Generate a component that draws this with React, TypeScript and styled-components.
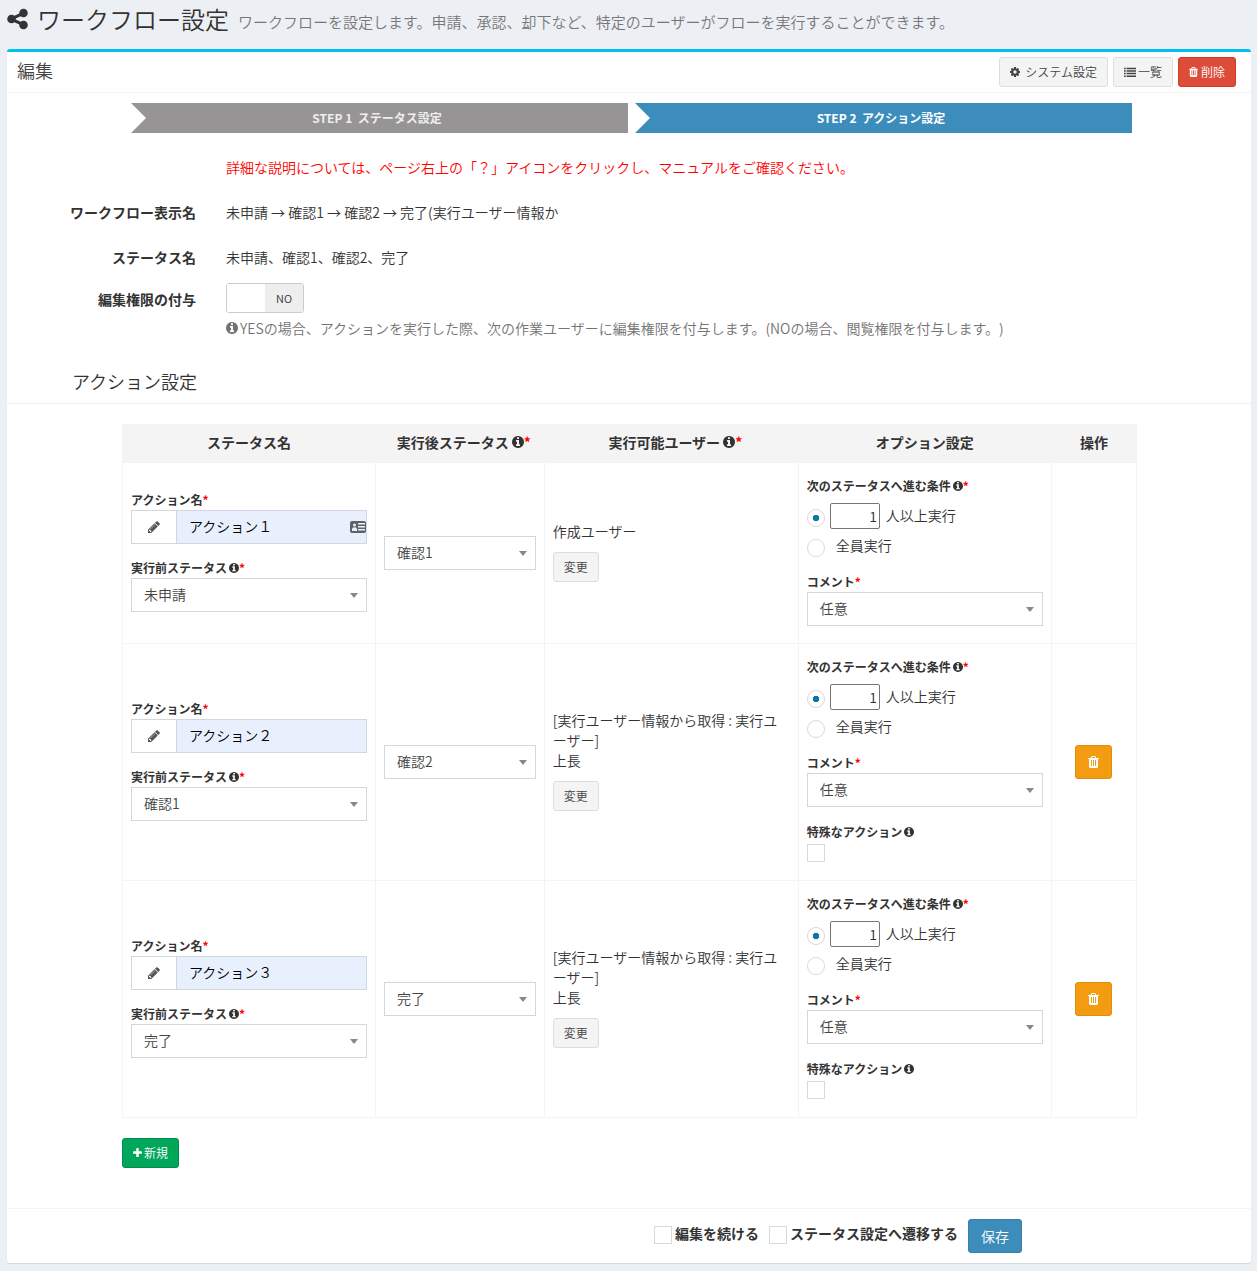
import React, { useId, useState } from "react";
import styled, { createGlobalStyle, css } from "styled-components";

const GlobalStyle = createGlobalStyle`
  *, *::before, *::after { box-sizing: border-box; }
  body {
    margin: 0;
    background: #ecf0f5;
    color: #333;
    font-family: "Noto Sans CJK JP", "Noto Sans", sans-serif;
    font-size: 14px;
    font-weight: 350;
    line-height: 20px;
    text-spacing-trim: space-all;
  }
  button, input, select { font: inherit; color: inherit; margin: 0; }
  h1, h2, h3 { margin: 0; font-weight: 350; }
  p { margin: 0; }
`;

/* ---------- icons ---------- */

const glyphs = {
  share: {
    x: 128,
    w: 1536,
    d: "M1344 1024q133 0 226.5 93.5t93.5 226.5-93.5 226.5-226.5 93.5-226.5-93.5-93.5-226.5q0-12 2-34l-360-180q-92 86-218 86-133 0-226.5-93.5t-93.5-226.5 93.5-226.5 226.5-93.5q126 0 218 86l360-180q-2-22-2-34 0-133 93.5-226.5t226.5-93.5 226.5 93.5 93.5 226.5-93.5 226.5-226.5 93.5q-126 0-218-86l-360 180q2 22 2 34t-2 34l360 180q92-86 218-86z",
  },
  cog: {
    x: 128,
    w: 1536,
    d: "M1152 896q0-106-75-181t-181-75-181 75-75 181 75 181 181 75 181-75 75-181zm512-109v222q0 12-8 23t-20 13l-185 28q-19 54-39 91 35 50 107 138 10 12 10 25t-9 23q-27 37-99 108t-94 71q-12 0-26-9l-138-108q-44 23-91 38-16 136-29 186-7 28-36 28h-222q-14 0-24.5-8.5t-11.5-21.5l-28-184q-49-16-90-37l-141 107q-10 9-25 9-14 0-25-11-126-114-165-168-7-10-7-23 0-12 8-23 15-21 51-66.5t54-70.5q-27-50-41-99l-183-27q-13-2-21-12.5t-8-23.5v-222q0-12 8-23t19-13l186-28q14-46 39-92-40-57-107-138-10-12-10-24 0-10 9-23 26-36 98.5-107.5t94.5-71.5q13 0 26 10l138 107q44-23 91-38 16-136 29-186 7-28 36-28h222q14 0 24.5 8.5t11.5 21.5l28 184q49 16 90 37l142-107q9-9 24-9 13 0 25 10 129 119 165 170 7 8 7 22 0 12-8 23-15 21-51 66.5t-54 70.5q26 50 41 98l183 28q13 2 21 12.5t8 23.5z",
  },
  list: {
    x: 0,
    w: 1792,
    d: "M0 256h256v224h-256zM384 256h1408v224h-1408zM0 640h256v224h-256zM384 640h1408v224h-1408zM0 1024h256v224h-256zM384 1024h1408v224h-1408zM0 1408h256v224h-256zM384 1408h1408v224h-1408z",
  },
  trash: {
    x: 192,
    w: 1408,
    d: "M704 1376v-704q0-14-9-23t-23-9h-64q-14 0-23 9t-9 23v704q0 14 9 23t23 9h64q14 0 23-9t9-23zm256 0v-704q0-14-9-23t-23-9h-64q-14 0-23 9t-9 23v704q0 14 9 23t23 9h64q14 0 23-9t9-23zm256 0v-704q0-14-9-23t-23-9h-64q-14 0-23 9t-9 23v704q0 14 9 23t23 9h64q14 0 23-9t9-23zm-544-992h448l-48-117q-7-9-17-11h-317q-10 2-17 11zm928 32v64q0 14-9 23t-23 9h-96v948q0 83-47 143.5t-113 60.5h-832q-66 0-113-58.5t-47-141.5v-952h-96q-14 0-23-9t-9-23v-64q0-14 9-23t23-9h309l70-167q15-37 54-63t79-26h320q40 0 79 26t54 63l70 167h309q14 0 23 9t9 23z",
  },
  info: {
    x: 128,
    w: 1536,
    d: "M1152 1376v-160q0-14-9-23t-23-9h-96v-512q0-14-9-23t-23-9h-320q-14 0-23 9t-9 23v160q0 14 9 23t23 9h96v320h-96q-14 0-23 9t-9 23v160q0 14 9 23t23 9h448q14 0 23-9t9-23zm-128-896v-160q0-14-9-23t-23-9h-192q-14 0-23 9t-9 23v160q0 14 9 23t23 9h192q14 0 23-9t9-23zm640 416q0 209-103 385.5t-279.5 279.5-385.5 103-385.5-103-279.5-279.5-103-385.5 103-385.5 279.5-279.5 385.5-103 385.5 103 279.5 279.5 103 385.5z",
  },
  plus: {
    x: 192,
    w: 1408,
    d: "M1600 736v192q0 40-28 68t-68 28h-416v416q0 40-28 68t-68 28h-192q-40 0-68-28t-28-68v-416h-416q-40 0-68-28t-28-68v-192q0-40 28-68t68-28h416v-416q0-40 28-68t68-28h192q40 0 68 28t28 68v416h416q40 0 68 28t28 68z",
  },
  pencil: {
    x: 128,
    w: 1536,
    d: "M491 1536l91-91-235-235-91 91v107h128v128h107zm523-928q0-22-22-22-10 0-17 7l-542 542q-7 7-7 17 0 22 22 22 10 0 17-7l542-542q7-7 7-17zm-54-192l416 416-832 832h-416v-416zm683 96q0 53-37 90l-166 166-416-416 166-165q36-38 90-38 53 0 91 38l235 234q37 39 37 91z",
  },
};

const Glyph = styled.svg`
  display: block;
  flex: none;
  fill: currentColor;
`;

function Icon({ name, size = 14 }: { name: keyof typeof glyphs; size?: number }) {
  const g = glyphs[name];
  return (
    <Glyph
      viewBox={`${g.x} 0 ${g.w} 1792`}
      width={Math.round((size * g.w) / 1792)}
      height={size}
      aria-hidden="true"
    >
      <path d={g.d} />
    </Glyph>
  );
}

/* ---------- page frame ---------- */

const PageHeader = styled.header`
  display: flex;
  align-items: flex-end;
  gap: 9px;
  padding: 6px 7px 17px;
`;

const PageTitle = styled.h1`
  display: flex;
  align-items: center;
  gap: 9px;
  font-size: 24px;
  line-height: 26px;
`;

const PageNote = styled.p`
  color: #777;
  font-size: 15px;
`;

const Box = styled.main`
  margin: 0 6px 8px 7px;
  background: #fff;
  border-top: 3px solid #00c0ef;
  border-radius: 3px;
  box-shadow: 0 1px 1px rgba(0, 0, 0, 0.1);
`;

const BoxHeader = styled.div`
  display: flex;
  align-items: center;
  justify-content: space-between;
  padding: 5px 15px 5px 10px;
  border-bottom: 1px solid #f4f4f4;
`;

const BoxTitle = styled.h2`
  color: #444;
  font-size: 18px;
  line-height: 20px;
  padding-bottom: 5px;
`;

const Tools = styled.div`
  display: flex;
  gap: 5px;
`;

const tones = {
  plain: ["#f4f4f4", "#ddd", "#444"],
  danger: ["#dd4b39", "#d73925", "#fff"],
  success: ["#00a65a", "#008d4c", "#fff"],
  warning: ["#f39c12", "#e08e0b", "#fff"],
  primary: ["#3c8dbc", "#367fa9", "#fff"],
};

const buttonLook = css<{ $tone: keyof typeof tones; $large?: boolean; $gap?: number }>`
  display: inline-flex;
  align-items: center;
  justify-content: center;
  gap: ${(p) => p.$gap ?? 2}px;
  height: ${(p) => (p.$large ? 34 : 30)}px;
  padding: 0 ${(p) => (p.$large ? 12 : 10)}px;
  border: 1px solid ${(p) => tones[p.$tone][1]};
  border-radius: 3px;
  background: ${(p) => tones[p.$tone][0]};
  color: ${(p) => tones[p.$tone][2]};
  font-size: ${(p) => (p.$large ? 14 : 12)}px;
  line-height: 18px;
  text-decoration: none;
  cursor: pointer;
`;

const Button = styled.button`
  ${buttonLook}
`;

const ButtonLink = styled.a`
  ${buttonLook}
`;

const BoxBody = styled.div`
  padding: 10px 0 40px;
`;

/* ---------- steps ---------- */

const Steps = styled.ol`
  display: flex;
  gap: 7px;
  margin: 0 119px 0 124px;
  padding: 0;
  list-style: none;
`;

const Step = styled.li<{ $active?: boolean }>`
  flex: 1;
  padding: 5px 5px 5px 0;
  background: ${(p) => (p.$active ? "#3c8dbc" : "#979495")};
  clip-path: polygon(0 0, 100% 0, 100% 100%, 0 100%, 15px 50%);
  color: ${(p) => (p.$active ? "#fff" : "#eee")};
  font-size: 12px;
  font-weight: 700;
  text-align: center;
  white-space: pre;
`;

/* ---------- settings form ---------- */

const Settings = styled.div`
  display: grid;
  grid-template-columns: 189px 1fr;
  column-gap: 30px;
  row-gap: 25px;
  margin-top: 24px;
`;

const Notice = styled.p`
  grid-column: 2;
  color: #f00;
`;

const FieldName = styled.div`
  font-weight: 700;
  text-align: right;
`;

const ToggleRow = styled.div`
  grid-column: 1 / -1;
  display: grid;
  grid-template-columns: subgrid;
  margin-top: -9px;
`;

const ToggleName = styled.label`
  padding-top: 6px;
  font-weight: 700;
  text-align: right;
`;

const Toggle = styled.label`
  display: flex;
  width: 78px;
  height: 30px;
  border: 1px solid #ccc;
  border-radius: 3px;
  overflow: hidden;
  cursor: pointer;
`;

const ToggleInput = styled.input`
  appearance: none;
  width: 0;
  height: 0;
`;

const ToggleHalf = styled.span<{ $filled: boolean }>`
  flex: 1;
  background: ${(p) => (p.$filled ? "#eee" : "#fff")};
  font-size: 11px;
  line-height: 28px;
  text-align: center;
`;

const Help = styled.p`
  display: flex;
  align-items: center;
  gap: 2px;
  margin-top: 5px;
  color: #737373;
`;

const SectionTitle = styled.h3`
  margin-top: 33px;
  padding: 0 0 12px 65px;
  border-bottom: 1px solid #eee;
  font-size: 18px;
`;

/* ---------- action table ---------- */

const TableArea = styled.div`
  margin: 20px 114px 0 115px;
`;

const Table = styled.table`
  width: 100%;
  table-layout: fixed;
  border-collapse: collapse;
  margin-bottom: 20px;
`;

const Col = styled.col<{ $share: string }>`
  width: ${(p) => p.$share};
`;

const HeadCell = styled.th`
  padding: 7px 8px 10px;
  border: 1px solid #f4f4f4;
  background: #f4f4f4;
  font-weight: 700;
`;

const Cell = styled.td<{ $tall?: boolean; $center?: boolean }>`
  padding: ${(p) => (p.$tall ? "14px 8px 17px" : "8px")};
  border: 1px solid #f4f4f4;
  vertical-align: middle;
  text-align: ${(p) => (p.$center ? "center" : "left")};
`;

const Caption = styled.span`
  display: flex;
  align-items: center;
`;

const HeadCaption = styled(Caption)<{ $marked?: boolean }>`
  justify-content: center;
  padding-left: ${(p) => (p.$marked ? 8 : 0)}px;
`;

const InfoMark = styled.span<{ $wide?: boolean }>`
  margin-left: ${(p) => (p.$wide ? 3 : 2)}px;
`;

const Star = styled.span`
  color: #f00;
`;

type TitleProps = { text: string; info?: boolean; required?: boolean };

function Titled({ text, info, required }: TitleProps) {
  return (
    <Caption>
      {text}
      {info && (
        <InfoMark>
          <Icon name="info" size={12} />
        </InfoMark>
      )}
      {required && <Star>*</Star>}
    </Caption>
  );
}

function HeadTitle({ text, info, required }: TitleProps) {
  return (
    <HeadCaption $marked={info}>
      {text}
      {info && (
        <InfoMark $wide>
          <Icon name="info" />
        </InfoMark>
      )}
      {required && <Star>*</Star>}
    </HeadCaption>
  );
}

const FieldStack = styled.div`
  display: grid;
  gap: 15px;
  padding-bottom: 3px;
`;

const Field = styled.div`
  display: grid;
  gap: 1px;
`;

const FieldLabel = styled.label`
  font-size: 12px;
  font-weight: 700;
  line-height: 18px;
`;

const InputGroup = styled.div`
  display: flex;
  height: 34px;
  border: 1px solid #d2d6de;
`;

const Addon = styled.span`
  display: flex;
  align-items: center;
  justify-content: center;
  flex: none;
  width: 45px;
  border-right: 1px solid #d2d6de;
  color: #555;
`;

const InputHolder = styled.span`
  display: grid;
  flex: 1;
  min-width: 0;
  align-items: center;
  background: #e8f0fe;
  > * { grid-area: 1 / 1; }
  > svg { justify-self: end; }
`;

const TextInput = styled.input`
  width: 100%;
  height: 32px;
  padding: 0 12px 3px;
  border: 0;
  background: transparent;
  color: #000;
`;

const SelectHolder = styled.span`
  display: grid;
  align-items: center;
  > * { grid-area: 1 / 1; }
`;

const SelectBox = styled.select`
  appearance: none;
  width: 100%;
  height: 34px;
  padding: 0 28px 2px 12px;
  border: 1px solid #d2d6de;
  border-radius: 0;
  background: #fff;
  color: #444;
`;

const Arrow = styled.span`
  justify-self: end;
  margin-right: 9px;
  border: 4px solid transparent;
  border-top: 5px solid #888;
  border-bottom: 0;
  pointer-events: none;
`;

function Select({ value, options, id, label }: { value: string; options: string[]; id?: string; label?: string }) {
  return (
    <SelectHolder>
      <SelectBox id={id} aria-label={label} defaultValue={value}>
        {options.map((o) => (
          <option key={o}>{o}</option>
        ))}
      </SelectBox>
      <Arrow />
    </SelectHolder>
  );
}

const Users = styled.div`
  display: grid;
  gap: 11px;
  justify-items: start;
  padding-bottom: 4px;
`;

const UserText = styled.p`
  line-break: anywhere;
`;

const Choices = styled.fieldset`
  min-width: 0;
  margin: 0 0 12px;
  padding: 0;
  border: 0;
`;

const Legend = styled.legend`
  margin-bottom: 6px;
  padding: 0;
  font-size: 12px;
  font-weight: 700;
  line-height: 18px;
`;

const Choice = styled.div`
  display: flex;
  align-items: center;
  gap: 5px;
  height: 30px;
`;

const Radio = styled.input`
  appearance: none;
  flex: none;
  width: 18px;
  height: 18px;
  margin-top: 4px;
  border: 1px solid #d9d9d9;
  border-radius: 50%;
  &:checked { background: radial-gradient(circle, #0e76a8 0 3px, #fff 3.5px); }
`;

const CountInput = styled.input`
  width: 50px;
  height: 26px;
  padding: 0 2px;
  border: 1px solid #767676;
  border-radius: 2px;
  background: #fff;
  text-align: right;
  appearance: textfield;
  &::-webkit-inner-spin-button,
  &::-webkit-outer-spin-button { appearance: none; margin: 0; }
`;

const ChoiceText = styled.label<{ $indent?: boolean }>`
  padding: 0 0 2px ${(p) => (p.$indent ? 6 : 1)}px;
`;

const Check = styled.input`
  appearance: none;
  flex: none;
  width: 18px;
  height: 18px;
  border: 1px solid #d9d9d9;
  background: #fff;
  &:checked { background: #3c8dbc; }
`;

const SpecialField = styled.div`
  display: grid;
  gap: 3px;
  margin-top: 16px;
  padding-bottom: 1px;
`;

/* ---------- footer ---------- */

const BoxFooter = styled.footer`
  display: flex;
  align-items: center;
  justify-content: flex-end;
  gap: 10px;
  padding: 10px 229px 10px 10px;
  border-top: 1px solid #f4f4f4;
`;

const FooterOption = styled.label`
  display: flex;
  align-items: center;
  gap: 3px;
  padding-bottom: 2px;
  font-weight: 700;
`;

const FooterText = styled.span`
  padding-bottom: 4px;
`;

/* ---------- content ---------- */

type Action = { name: string; before: string; after: string; users: string[]; special: boolean; card?: boolean };

const statuses = ["未申請", "確認1", "確認2", "完了"];

const actions: Action[] = [
  { name: "アクション１", before: "未申請", after: "確認1", users: ["作成ユーザー"], special: false, card: true },
  { name: "アクション２", before: "確認1", after: "確認2", users: ["[実行ユーザー情報から取得 : 実行ユーザー]", "上長"], special: true },
  { name: "アクション３", before: "完了", after: "完了", users: ["[実行ユーザー情報から取得 : 実行ユーザー]", "上長"], special: true },
];

function CardIcon() {
  return (
    <svg width="16" height="12" viewBox="0 0 16 12" aria-hidden="true">
      <rect width="16" height="12" rx="2" fill="#5f6368" />
      <circle cx="4.500" cy="4" r="1.500" fill="#e8f0fe" />
      <path d="M2 10V8q0-1.800 2.500-1.800T7 8v2z" fill="#e8f0fe" />
      <path d="M8 2h7v1.500h-7zM8 5h7v1.500h-7zM8 8h7v1.500h-7z" fill="#e8f0fe" />
    </svg>
  );
}

function ActionRow({ action }: { action: Action }) {
  const id = useId();
  return (
    <tr>
      <Cell>
        <FieldStack>
          <Field>
            <FieldLabel htmlFor={`${id}name`}>
              <Titled text="アクション名" required />
            </FieldLabel>
            <InputGroup>
              <Addon>
                <Icon name="pencil" />
              </Addon>
              <InputHolder>
                <TextInput id={`${id}name`} type="text" defaultValue={action.name} />
                {action.card && <CardIcon />}
              </InputHolder>
            </InputGroup>
          </Field>
          <Field>
            <FieldLabel htmlFor={`${id}before`}>
              <Titled text="実行前ステータス" info required />
            </FieldLabel>
            <Select id={`${id}before`} value={action.before} options={statuses} />
          </Field>
        </FieldStack>
      </Cell>
      <Cell>
        <Select label="実行後ステータス" value={action.after} options={statuses} />
      </Cell>
      <Cell>
        <Users>
          <UserText>
            {action.users.map((u, i) => (
              <React.Fragment key={u}>
                {i > 0 && <br />}
                {u}
              </React.Fragment>
            ))}
          </UserText>
          <Button type="button" $tone="plain">変更</Button>
        </Users>
      </Cell>
      <Cell $tall>
        <Choices>
          <Legend>
            <Titled text="次のステータスへ進む条件" info required />
          </Legend>
          <Choice>
            <Radio type="radio" id={`${id}some`} name={`${id}rule`} defaultChecked />
            <CountInput type="number" aria-label="人数" defaultValue={1} />
            <ChoiceText htmlFor={`${id}some`}>人以上実行</ChoiceText>
          </Choice>
          <Choice>
            <Radio type="radio" id={`${id}all`} name={`${id}rule`} />
            <ChoiceText htmlFor={`${id}all`} $indent>全員実行</ChoiceText>
          </Choice>
        </Choices>
        <Field>
          <FieldLabel htmlFor={`${id}comment`}>
            <Titled text="コメント" required />
          </FieldLabel>
          <Select id={`${id}comment`} value="任意" options={["任意", "必須"]} />
        </Field>
        {action.special && (
          <SpecialField>
            <FieldLabel htmlFor={`${id}special`}>
              <Titled text="特殊なアクション" info />
            </FieldLabel>
            <Check type="checkbox" id={`${id}special`} />
          </SpecialField>
        )}
      </Cell>
      <Cell $center>
        {action.special && (
          <Button type="button" $tone="warning" $large aria-label="削除">
            <Icon name="trash" />
          </Button>
        )}
      </Cell>
    </tr>
  );
}

export default function App() {
  const [grant, setGrant] = useState(false);
  return (
    <>
      <GlobalStyle />
      <PageHeader>
        <PageTitle>
          <Icon name="share" size={24} />
          ワークフロー設定
        </PageTitle>
        <PageNote>ワークフローを設定します。申請、承認、却下など、特定のユーザーがフローを実行することができます。</PageNote>
      </PageHeader>
      <Box>
        <BoxHeader>
          <BoxTitle>編集</BoxTitle>
          <Tools>
            <ButtonLink href="#system" $tone="plain" $gap={5}>
              <Icon name="cog" size={12} />
              システム設定
            </ButtonLink>
            <ButtonLink href="#list" $tone="plain">
              <Icon name="list" size={12} />
              一覧
            </ButtonLink>
            <Button type="button" $tone="danger" $gap={3}>
              <Icon name="trash" size={12} />
              削除
            </Button>
          </Tools>
        </BoxHeader>
        <BoxBody>
          <Steps>
            <Step>{"STEP 1  ステータス設定"}</Step>
            <Step $active>{"STEP 2  アクション設定"}</Step>
          </Steps>
          <Settings>
            <Notice>詳細な説明については、ページ右上の「？」アイコンをクリックし、マニュアルをご確認ください。</Notice>
            <FieldName>ワークフロー表示名</FieldName>
            <div>未申請 → 確認1 → 確認2 → 完了(実行ユーザー情報か</div>
            <FieldName>ステータス名</FieldName>
            <div>未申請、確認1、確認2、完了</div>
            <ToggleRow>
              <ToggleName htmlFor="grant">編集権限の付与</ToggleName>
              <div>
                <Toggle>
                  <ToggleInput id="grant" type="checkbox" checked={grant} onChange={(e) => setGrant(e.target.checked)} />
                  <ToggleHalf $filled={grant}>{grant ? "YES" : ""}</ToggleHalf>
                  <ToggleHalf $filled={!grant}>{grant ? "" : "NO"}</ToggleHalf>
                </Toggle>
                <Help>
                  <Icon name="info" />
                  YESの場合、アクションを実行した際、次の作業ユーザーに編集権限を付与します。(NOの場合、閲覧権限を付与します。)
                </Help>
              </div>
            </ToggleRow>
          </Settings>
          <SectionTitle>アクション設定</SectionTitle>
          <TableArea>
            <Table>
              <colgroup>
                <Col $share="24.95%" />
                <Col $share="16.65%" />
                <Col $share="25.05%" />
                <Col $share="24.95%" />
                <Col $share="8.4%" />
              </colgroup>
              <thead>
                <tr>
                  <HeadCell><HeadTitle text="ステータス名" /></HeadCell>
                  <HeadCell><HeadTitle text="実行後ステータス" info required /></HeadCell>
                  <HeadCell><HeadTitle text="実行可能ユーザー" info required /></HeadCell>
                  <HeadCell><HeadTitle text="オプション設定" /></HeadCell>
                  <HeadCell><HeadTitle text="操作" /></HeadCell>
                </tr>
              </thead>
              <tbody>
                {actions.map((a) => (
                  <ActionRow key={a.name} action={a} />
                ))}
              </tbody>
            </Table>
            <Button type="button" $tone="success">
              <Icon name="plus" size={12} />
              新規
            </Button>
          </TableArea>
        </BoxBody>
        <BoxFooter>
          <FooterOption>
            <Check type="checkbox" />
            <FooterText>編集を続ける</FooterText>
          </FooterOption>
          <FooterOption>
            <Check type="checkbox" />
            <FooterText>ステータス設定へ遷移する</FooterText>
          </FooterOption>
          <Button type="submit" $tone="primary" $large>保存</Button>
        </BoxFooter>
      </Box>
    </>
  );
}
